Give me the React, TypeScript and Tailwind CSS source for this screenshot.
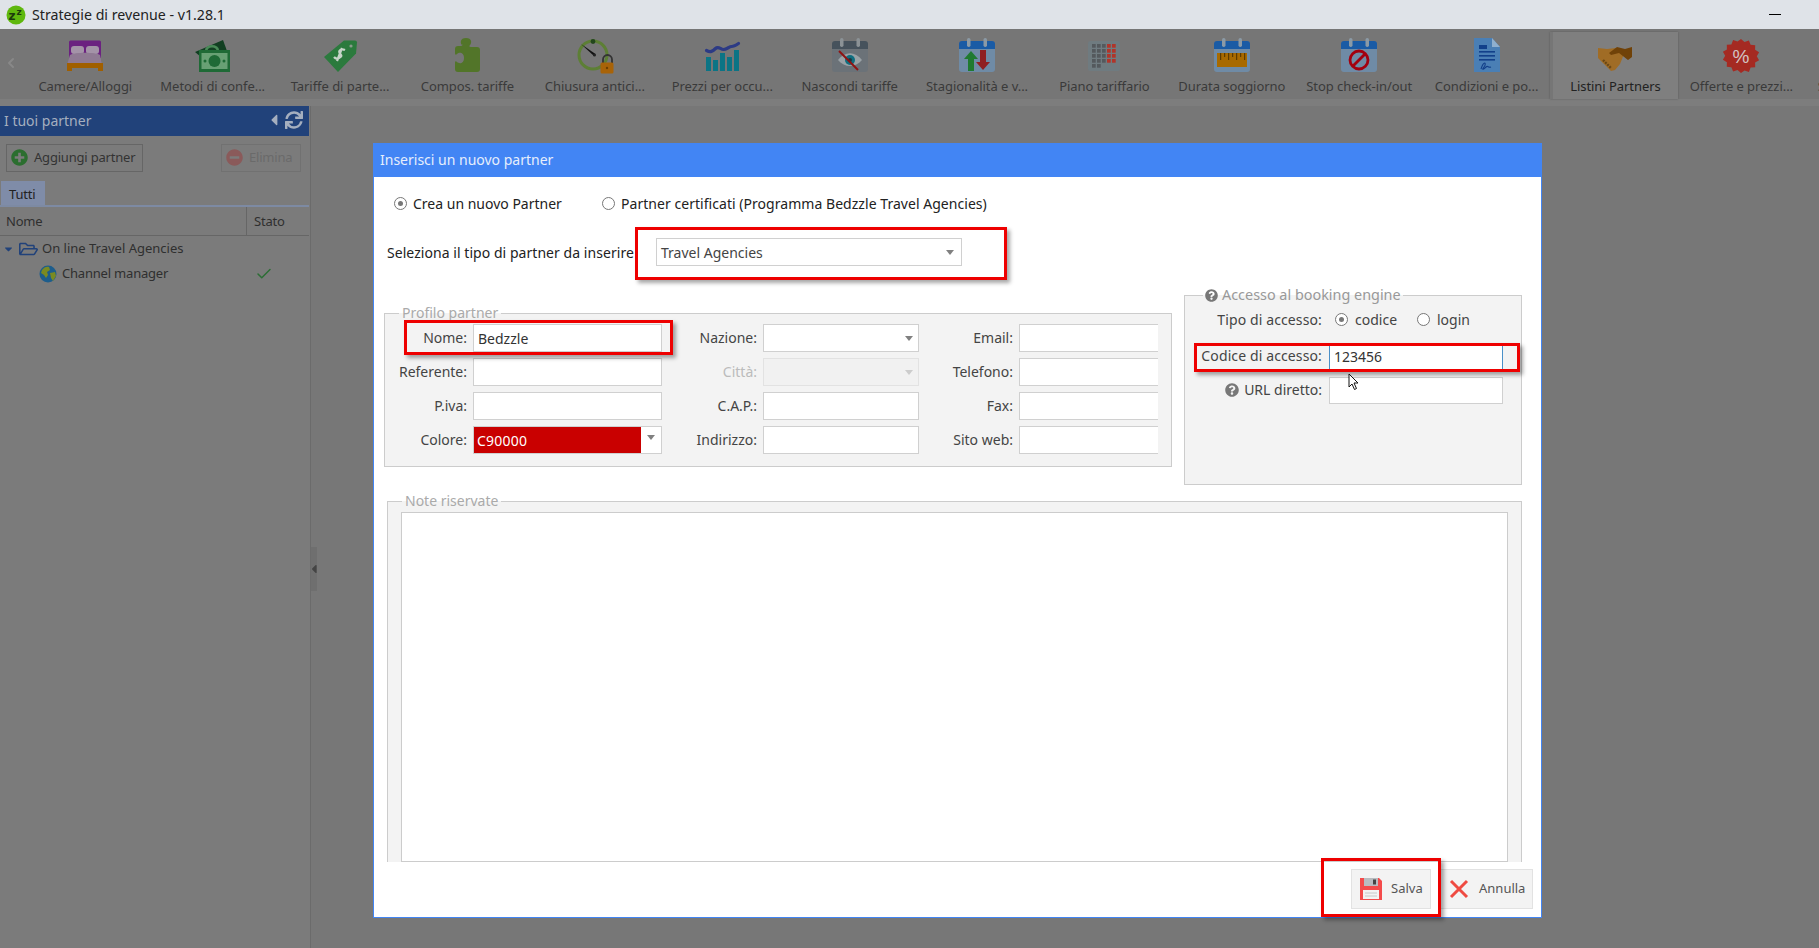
import type { ReactNode } from "react";
import { ChevronLeft, Check } from "lucide-react";
import {
  FaSync,
  FaPlusCircle,
  FaMinusCircle,
  FaRegFolderOpen,
  FaQuestionCircle,
  FaCaretLeft,
  FaCaretDown,
} from "react-icons/fa";

const BedIcon = (
  <svg viewBox="0 0 40 40" className="h-10 w-10">
    <path d="M4 6a1.5 1.5 0 0 1 1.5-1.5h29A1.5 1.5 0 0 1 36 6v16H4z" fill="#6b2180" />
    <rect x="6" y="10" width="13" height="8" rx="3" fill="#a493a8" />
    <rect x="21" y="10" width="13" height="8" rx="3" fill="#a493a8" />
    <path d="M5 19c4-3 26-3 30 0l2 10H2z" fill="#8f7a93" />
    <rect x="2" y="27" width="36" height="5" fill="#a05f00" />
    <rect x="2" y="32" width="5" height="3" fill="#a05f00" />
    <rect x="33" y="32" width="5" height="3" fill="#a05f00" />
  </svg>
);

const MoneyIcon = (
  <svg viewBox="0 0 40 40" className="h-10 w-10">
    <path d="M2 16L30 4l4 11v6H8z" fill="#123f22" />
    <ellipse cx="19" cy="14" rx="7" ry="5" fill="#4a8a58" />
    <ellipse cx="19" cy="15" rx="4.5" ry="3.5" fill="#123f22" />
    <rect x="6" y="14" width="31" height="22" fill="#1f6a36" />
    <rect x="8.5" y="17" width="26" height="16" fill="#68a074" />
    <ellipse cx="21.5" cy="25" rx="6" ry="6" fill="#1f6a36" />
    <circle cx="12" cy="25" r="1.5" fill="#1f6a36" />
    <circle cx="31" cy="25" r="1.5" fill="#1f6a36" />
  </svg>
);

const TagIcon = (
  <svg viewBox="0 0 40 40" className="h-10 w-10">
    <path d="M24 4.5l11 0a2 2 0 0 1 2 2l-1 11L18 36 4 21z" fill="#2b7a3d" />
    <circle cx="31" cy="10" r="1.6" fill="#8a9a8c" />
    <path d="M25 14c-4-2-7 1-5 3.5s2 3-1 4.5-5-1-5-1M22 12l-5 13" fill="none" stroke="#c7d4c9" strokeWidth="2.2" />
  </svg>
);

const PuzzleIcon = (
  <svg viewBox="0 0 40 40" className="h-10 w-10">
    <path d="M15 9c-2-2-2-7 4-7s6 5 4 7c-1 1-1 2 1 2h6a3 3 0 0 1 3 3v19a3 3 0 0 1-3 3H11a3 3 0 0 1-3-3v-6c0-2 1-2 2-1 2 2 7 2 7-4s-5-6-7-4c-1 1-2 1-2-1v-4a3 3 0 0 1 3-3h3c1 0 2-1 1-2z" fill="#527529" />
  </svg>
);

const ClockLockIcon = (
  <svg viewBox="0 0 40 40" className="h-10 w-10">
    <circle cx="18" cy="19" r="14" fill="none" stroke="#5d7f35" strokeWidth="3" />
    <circle cx="18" cy="5.5" r="2.4" fill="#22461c" />
    <path d="M6 8l13 12 1.5-2z" fill="#111" />
    <circle cx="19.5" cy="19" r="1.5" fill="#222" />
    <path d="M28 27v-3.5a4.5 4.5 0 0 1 9 0V27" fill="none" stroke="#333" strokeWidth="1.8" />
    <rect x="25.5" y="26.5" width="13" height="11" rx="1.5" fill="#a86308" />
    <circle cx="32" cy="32" r="1.2" fill="#6b3f00" />
  </svg>
);

const ChartIcon = (
  <svg viewBox="0 0 40 40" className="h-10 w-10">
    <rect x="4" y="21" width="5" height="14" fill="#0b7485" />
    <rect x="11" y="24" width="5" height="11" fill="#0b7485" />
    <rect x="18" y="17" width="5" height="18" fill="#0b7485" />
    <rect x="25" y="21" width="5" height="14" fill="#0b7485" />
    <rect x="32" y="14" width="5" height="21" fill="#0b7485" />
    <path d="M4.500 14.500c4 2 6 1 9-2s5 1 8 1 6-3 8-3 4-1 7-3" fill="none" stroke="#2c3a85" strokeWidth="3.2" strokeLinecap="round" />
  </svg>
);

const calendarShell = (top: string, body: string, rings: string) => (
  <>
    <path d="M2 8a3 3 0 0 1 3-3h30a3 3 0 0 1 3 3v6H2z" fill={top} />
    <path d="M2 13h36v20a3 3 0 0 1-3 3H5a3 3 0 0 1-3-3z" fill={body} />
    <rect x="10" y="2" width="3.5" height="9" rx="1.7" fill={rings} />
    <rect x="26.5" y="2" width="3.5" height="9" rx="1.7" fill={rings} />
  </>
);

const HiddenIcon = (
  <svg viewBox="0 0 40 40" className="h-10 w-10">
    {calendarShell("#46525c", "#6b7278", "#8b9296")}
    <path d="M8 24c7-9 17-9 24 0-7 8-17 8-24 0z" fill="#9aa2a6" />
    <circle cx="20" cy="24" r="5" fill="#0f6e80" />
    <circle cx="20" cy="24" r="2" fill="#22343c" />
    <path d="M9 15l19 19" stroke="#8f1212" strokeWidth="2" />
  </svg>
);

const SeasonIcon = (
  <svg viewBox="0 0 40 40" className="h-10 w-10">
    {calendarShell("#1a5ba5", "#6f8ba6", "#8b9aa6")}
    <path d="M7 23l7-8 7 8h-4v12h-6V23z" fill="#1f7a30" />
    <path d="M33 26l-7 8-7-8h4V14h6v12z" fill="#8f1f22" />
  </svg>
);

const GridIcon = (
  <svg viewBox="0 0 40 40" className="h-10 w-10">
    <rect x="4" y="5" width="32" height="30" rx="2.5" fill="#6f7b80" />
    {[0, 1, 2, 3, 4].map((r) =>
      [0, 1, 2, 3, 4].map((c) =>
        r === 4 && c > 1 ? null : (
          <rect
            key={`${r}-${c}`}
            x={8 + c * 5}
            y={8 + r * 5}
            width="3.7"
            height="3.7"
            fill={c >= 3 && r < 4 ? "#b0352a" : "#54595d"}
          />
        ),
      ),
    )}
  </svg>
);

const RulerIcon = (
  <svg viewBox="0 0 40 40" className="h-10 w-10">
    {calendarShell("#1a5ba5", "#6f8ba6", "#8b9aa6")}
    <rect x="5" y="17" width="30" height="14" fill="#a86a00" />
    {[8, 12, 16, 20, 24, 28, 32].map((x, i) => (
      <rect key={x} x={x} y="17" width="1.2" height={i % 2 ? 4 : 7} fill="#5d3b00" />
    ))}
  </svg>
);

const StopIcon = (
  <svg viewBox="0 0 40 40" className="h-10 w-10">
    {calendarShell("#1a5ba5", "#6f8ba6", "#8b9aa6")}
    <circle cx="20" cy="24" r="9" fill="none" stroke="#a3000f" strokeWidth="2.8" />
    <path d="M14 30l12-12" stroke="#a3000f" strokeWidth="2.8" />
  </svg>
);

const ContractIcon = (
  <svg viewBox="0 0 40 40" className="h-10 w-10">
    <path d="M7 2h18l8 9v25H7z" fill="#4a7fb5" />
    <path d="M25 2l8 9h-8z" fill="#8fb0cf" />
    <rect x="12" y="9" width="8" height="4" fill="#12408a" />
    <rect x="12" y="15" width="16" height="1.6" fill="#12408a" />
    <rect x="12" y="19" width="16" height="1.6" fill="#12408a" />
    <rect x="12" y="23" width="16" height="1.6" fill="#12408a" />
    <path d="M14 33c3-9 6-6 3-2s0 2 2 0 2 1 5 0" fill="none" stroke="#12408a" strokeWidth="1.1" />
  </svg>
);

const HandsIcon = (
  <svg viewBox="0 0 40 40" className="h-10 w-10">
    <path d="M3 12l9 1 9-1 8 6-4 10-5 6-4 1-8-8-5-5z" fill="#a06c25" />
    <path d="M37 11l-7 2-8-2-8 6 2 2 8-2 9 7 4-3z" fill="#704208" />
    <path d="M8 24l8 8" stroke="#6b4816" strokeWidth="2.4" strokeDasharray="2 1" />
  </svg>
);

const PercentIcon = (
  <svg viewBox="0 0 40 40" className="h-10 w-10">
    <path
      d="M20 3l3.500 3 4.400-1.500 1.700 4.300 4.600.4-.1 4.600 4 2.400-2.300 4 2.300 4-4 2.400.1 4.600-4.600.4-1.700 4.300-4.400-1.500L20 37l-3.500-3-4.400 1.500-1.700-4.300-4.600-.4.1-4.600-4-2.400 2.300-4-2.300-4 4-2.400-.1-4.600 4.600-.4 1.700-4.300 4.400 1.500z"
      fill="#a52a22"
    />
    <text x="20" y="27" textAnchor="middle" fontSize="19" fill="#d2c4c2" fontFamily="Liberation Sans, sans-serif">
      %
    </text>
  </svg>
);

const TOOLS: { label: string; icon: ReactNode; active?: boolean }[] = [
  { label: "Camere/Alloggi", icon: BedIcon },
  { label: "Metodi di confe...", icon: MoneyIcon },
  { label: "Tariffe di parte...", icon: TagIcon },
  { label: "Compos. tariffe", icon: PuzzleIcon },
  { label: "Chiusura antici...", icon: ClockLockIcon },
  { label: "Prezzi per occu...", icon: ChartIcon },
  { label: "Nascondi tariffe", icon: HiddenIcon },
  { label: "Stagionalità e v...", icon: SeasonIcon },
  { label: "Piano tariffario", icon: GridIcon },
  { label: "Durata soggiorno", icon: RulerIcon },
  { label: "Stop check-in/out", icon: StopIcon },
  { label: "Condizioni e po...", icon: ContractIcon },
  { label: "Listini Partners", icon: HandsIcon, active: true },
  { label: "Offerte e prezzi...", icon: PercentIcon },
  { label: "Sconti e promo...", icon: null },
];

function Radio({ checked }: { checked?: boolean }) {
  return (
    <span className="flex h-[13px] w-[13px] shrink-0 items-center justify-center rounded-full border-[1.5px] border-[#777] bg-white">
      {checked && <span className="h-[5px] w-[5px] rounded-full bg-[#777]" />}
    </span>
  );
}

function Arrow({ light }: { light?: boolean }) {
  return (
    <span
      className={`h-0 w-0 border-x-[4.5px] border-t-[5px] border-x-transparent ${
        light ? "border-t-[#ccc]" : "border-t-[#808080]"
      }`}
    />
  );
}

function Label({ children, w, muted }: { children: ReactNode; w: string; muted?: boolean }) {
  return (
    <span className={`${w} ${muted ? "text-[#bbb]" : "text-[#444]"} pr-[6px] text-right leading-[28px]`}>
      {children}
    </span>
  );
}

function Input({ value }: { value?: string }) {
  return (
    <div className="h-[28px] border border-[#d0d0d0] bg-white pl-[4px] leading-[27px] text-[#333]">{value}</div>
  );
}

function SelectBox({ disabled }: { disabled?: boolean }) {
  return (
    <div
      className={`flex h-[28px] items-center justify-end border pr-[5px] ${
        disabled ? "border-[#e2e2e2] bg-[#f1f1f1]" : "border-[#d0d0d0] bg-white"
      }`}
    >
      <Arrow light={disabled} />
    </div>
  );
}

function Annotation({ className }: { className: string }) {
  return (
    <div
      className={`pointer-events-none absolute border-[3px] border-[#ee0000] shadow-[3px_3px_4px_rgba(0,0,0,0.35)] ${className}`}
    />
  );
}

export default function App() {
  return (
    <div className="relative flex h-[948px] w-[1819px] flex-col overflow-hidden bg-[#777] font-['Noto_Sans',sans-serif] text-[14px] text-[#333]">
      {/* window title */}
      <header className="flex h-[29px] shrink-0 items-center bg-[#dfe3e8] pl-[6px]">
        <svg viewBox="0 0 20 20" className="h-[20px] w-[20px]">
          <circle cx="10" cy="10" r="9.500" fill="#5fb80e" />
          <text x="2.500" y="15" fontSize="12" fontWeight="700" fill="#1d3b0c" fontFamily="DejaVu Sans, sans-serif">
            z
          </text>
          <text x="10.500" y="10" fontSize="9" fontWeight="700" fill="#1d3b0c" fontFamily="DejaVu Sans, sans-serif">
            z
          </text>
        </svg>
        <span className="ml-[6px] text-[14.2px] text-[#222]">Strategie di revenue - v1.28.1</span>
        <span className="ml-auto mr-[38px] h-px w-[12px] bg-black" />
      </header>

      {/* ribbon */}
      <nav className="relative flex h-[70px] shrink-0 bg-[#767676] pl-[21.6px] text-[13px] tracking-[-0.05px]">
        <ChevronLeft className="absolute left-[3px] top-[23px] h-[22px] w-[16px] text-[#888]" strokeWidth={3} />
        {TOOLS.map((t) => (
          <div
            key={t.label}
            className={`mt-[3px] flex h-[67px] w-[127.4px] shrink-0 flex-col items-center pt-[4px] ${
              t.active
                ? "border-l-[3px] border-l-[#767676] bg-[#7f7f7f] text-[#222] shadow-[0_0_2px_rgba(0,0,0,0.25)]"
                : "text-[#3a3a3a]"
            }`}
          >
            <div className="h-[38px]">{t.icon}</div>
            <span className="mt-[3px] whitespace-nowrap leading-[18px]">{t.label}</span>
          </div>
        ))}
      </nav>
      <div className="h-[7px] shrink-0 bg-[#7d7d7d]" />

      <main className="flex min-h-0 flex-1">
        <aside className="w-[311px] shrink-0 border-r border-[#6b6b6b] bg-[#7b7b7b] text-[13px] tracking-[-0.2px]">
          <div className="w-[309px]">
            <div className="flex h-[30px] items-center bg-[#21427a] pb-[2px] pl-[4px] pr-[6px] text-[14px] tracking-normal text-[#a5afbf]">
              <span>I tuoi partner</span>
              <FaCaretLeft className="ml-auto h-[18px] w-[12px]" />
              <FaSync className="ml-[5px] h-[18px] w-[18px]" />
            </div>
            <div className="flex h-[45px] items-center justify-between pb-[2px] pl-[6px] pr-[8px]">
              <button className="flex h-[28px] w-[137px] items-center gap-[6px] whitespace-nowrap border border-[#666] pl-[4px] text-[#333]">
                <FaPlusCircle className="h-[17px] w-[17px] shrink-0 text-[#2b6e2f]" />
                Aggiungi partner
              </button>
              <button className="flex h-[28px] w-[80px] items-center gap-[6px] border border-[#717171] pl-[4px] text-[#6a6a6a]">
                <FaMinusCircle className="h-[17px] w-[17px] shrink-0 text-[#8a5a5a]" />
                Elimina
              </button>
            </div>
            <div className="h-[26px] border-b-2 border-[#7d8aa3] pl-px">
              <span className="inline-block h-[24px] w-[44px] bg-[#7f8ca8] pl-[8px] leading-[26px] text-[#222]">Tutti</span>
            </div>
            <div className="flex h-[29px] border-b border-[#666] leading-[28px] text-[#2f2f2f]">
              <span className="w-[247px] border-r border-[#666] pl-[6px]">Nome</span>
              <span className="pl-[7px]">Stato</span>
            </div>
            <div className="flex h-[25px] items-center pl-[3px] tracking-normal text-[#2f2f2f]">
              <FaCaretDown className="h-[12px] w-[11px] text-[#21427a]" />
              <FaRegFolderOpen className="ml-[5px] h-[18px] w-[19px] text-[#21427a]" />
              <span className="ml-[4px]">On line Travel Agencies</span>
            </div>
            <div className="flex h-[25px] items-center pl-[39px] text-[#2f2f2f]">
              <svg viewBox="0 0 18 18" className="h-[18px] w-[18px]">
                <circle cx="9" cy="9" r="8.5" fill="#1d5d8c" />
                <path d="M3 5c2-3 5-4 7-3l1 3-3 2 1 3-2 3-2-3-3-2zM11 8l5-1 1 4-3 5-2-3z" fill="#7a8a22" />
              </svg>
              <span className="ml-[5px] w-[193px]">Channel manager</span>
              <Check className="h-[18px] w-[18px] text-[#2c6e35]" strokeWidth={2} />
            </div>
          </div>
        </aside>

        <div className="flex flex-1 items-start">
          <div className="mt-[441px] flex h-[44px] w-[6px] items-center justify-start bg-[#6f6f6f]">
            <FaCaretLeft className="h-[14px] w-[6px] text-[#444]" />
          </div>
        </div>
      </main>

      {/* modal */}
      <section className="absolute left-[373px] top-[143px] h-[775px] w-[1169px] border border-[#4285f4] bg-white">
        <div className="-mx-px -mt-px flex h-[34px] items-center bg-[#4285f4] pb-[2px] pl-[7px] text-[#e6eefc]">
          Inserisci un nuovo partner
        </div>

        <div className="mt-[15px] flex h-[22px] items-center pl-[20px] text-[#222]">
          <div className="flex w-[208px] items-center gap-[6px]">
            <Radio checked />
            <span>Crea un nuovo Partner</span>
          </div>
          <div className="flex items-center gap-[6px]">
            <Radio />
            <span className="tracking-[0.04px]">Partner certificati (Programma Bedzzle Travel Agencies)</span>
          </div>
        </div>

        <div className="mt-[24px] flex h-[28px] items-center pl-[13px] text-[#222]">
          <span className="w-[269px] tracking-[0.05px]">Seleziona il tipo di partner da inserire</span>
          <div className="flex h-[28px] w-[306px] items-center justify-between border border-[#d0d0d0] pl-[4px] pr-[7px] text-[#444]">
            Travel Agencies
            <Arrow />
          </div>
        </div>

        <div className="mt-[19px] flex items-start pl-[10px]">
          <fieldset className="mt-[18px] w-[788px] border border-[#ccc] bg-[#f3f3f3] pb-[12px] pt-px">
            <legend className="ml-[14px] px-[3px] leading-[20px] text-[#aaa]">Profilo partner</legend>
            <div className="grid grid-cols-[88px_189px_101px_156px_100px_139px] gap-y-[6px]">
              <Label w="w-[88px]">Nome:</Label>
              <Input value="Bedzzle" />
              <Label w="w-[101px]">Nazione:</Label>
              <SelectBox />
              <Label w="w-[100px]">Email:</Label>
              <div className="h-[28px] border-y border-l border-[#d0d0d0] bg-white" />

              <Label w="w-[88px]">Referente:</Label>
              <Input />
              <Label w="w-[101px]" muted>Città:</Label>
              <SelectBox disabled />
              <Label w="w-[100px]">Telefono:</Label>
              <div className="h-[28px] border-y border-l border-[#d0d0d0] bg-white" />

              <Label w="w-[88px]">P.iva:</Label>
              <Input />
              <Label w="w-[101px]">C.A.P.:</Label>
              <Input />
              <Label w="w-[100px]">Fax:</Label>
              <div className="h-[28px] border-y border-l border-[#d0d0d0] bg-white" />

              <Label w="w-[88px]">Colore:</Label>
              <div className="flex h-[28px] border border-[#d0d0d0] bg-white">
                <span className="w-[167px] bg-[#c90000] pl-[3px] leading-[27px] tracking-[0.2px] text-white">C90000</span>
                <span className="flex flex-1 justify-center pt-[8px]">
                  <Arrow />
                </span>
              </div>
              <Label w="w-[101px]">Indirizzo:</Label>
              <Input />
              <Label w="w-[100px]">Sito web:</Label>
              <div className="h-[28px] border-y border-l border-[#d0d0d0] bg-white" />
            </div>
          </fieldset>

          <fieldset className="ml-[12px] h-[200px] w-[338px] border border-[#ccc] bg-[#f3f3f3]">
            <legend className="ml-[18px] flex items-center gap-[4px] px-[2px] text-[14.4px] leading-[20px] text-[#999]">
              <FaQuestionCircle className="h-[13px] w-[13px] text-[#777]" />
              Accesso al booking engine
            </legend>
            <div className="mt-[2px] flex h-[26px] items-center pb-px text-[#444]">
              <span className="w-[137px] text-right tracking-[0.12px]">Tipo di accesso:</span>
              <span className="ml-[13px]">
                <Radio checked />
              </span>
              <span className="ml-[7px] w-[62px]">codice</span>
              <Radio />
              <span className="ml-[7px]">login</span>
            </div>
            <div className="mt-[10px] flex h-[27px] items-center text-[#444]">
              <span className="w-[137px] pb-[2px] text-right tracking-[0.12px]">Codice di accesso:</span>
              <div className="ml-[7px] h-[27px] w-[174px] border border-[#4a90c8] bg-white pl-[4px] leading-[25px] text-[#333]">
                123456
              </div>
            </div>
            <div className="mt-[7px] flex h-[27px] items-center text-[#444]">
              <span className="flex w-[137px] items-center justify-end gap-[5px] pb-[2px]">
                <FaQuestionCircle className="h-[14px] w-[14px] text-[#777]" />
                URL diretto:
              </span>
              <div className="ml-[7px] h-[27px] w-[174px] border border-[#d0d0d0] bg-white" />
            </div>
          </fieldset>
        </div>

        <fieldset className="ml-[13px] mt-[6px] h-[371px] w-[1135px] border border-b-0 border-[#ccc] bg-[#f3f3f3]">
          <legend className="ml-[14px] px-[3px] leading-[20px] text-[#aaa]">Note riservate</legend>
          <div className="ml-[13px] mt-px h-[350px] w-[1107px] border border-[#ccc] bg-white" />
        </fieldset>

        <div className="mt-[7px] flex justify-end gap-[8px] pr-[8px] text-[13px]">
          <button className="flex h-[40px] w-[80px] items-center border border-[#e2e2e2] bg-[#f3f3f3] pl-[7px] text-[#555]">
            <svg viewBox="0 0 24 24" className="h-[24px] w-[24px]">
              <path d="M1 1h19l3 3v19H1z" fill="#f44b4b" />
              <rect x="5" y="1" width="14" height="8" fill="#b9bcc0" />
              <rect x="14" y="2.5" width="3" height="5" fill="#444" />
              <rect x="4" y="13" width="16" height="9" fill="#f3f3f3" />
              <path d="M6 16h12M6 19h12" stroke="#c8c8c8" />
            </svg>
            <span className="ml-[8px]">Salva</span>
          </button>
          <button className="flex h-[40px] w-[94px] items-center border border-[#e2e2e2] bg-[#f3f3f3] pl-[9px] text-[#555]">
            <svg viewBox="0 0 20 20" className="h-[20px] w-[20px]">
              <path d="M2 2l16 16M18 2L2 18" stroke="#ef4b42" strokeWidth="3" />
            </svg>
            <span className="ml-[10px]">Annulla</span>
          </button>
        </div>

        <Annotation className="left-[261px] top-[83px] h-[53px] w-[372px]" />
        <Annotation className="left-[30px] top-[176px] h-[35px] w-[269px]" />
        <Annotation className="left-[820px] top-[199px] h-[29px] w-[326px]" />
        <Annotation className="left-[947px] top-[714px] h-[59px] w-[120px]" />

        <svg viewBox="0 0 12 18" className="absolute left-[974px] top-[229px] h-[18px] w-[12px]">
          <path d="M1 1v13l3-3 2.500 5.500 2-1L6 10h4z" fill="#fff" stroke="#111" strokeWidth="1" />
        </svg>
      </section>
    </div>
  );
}
